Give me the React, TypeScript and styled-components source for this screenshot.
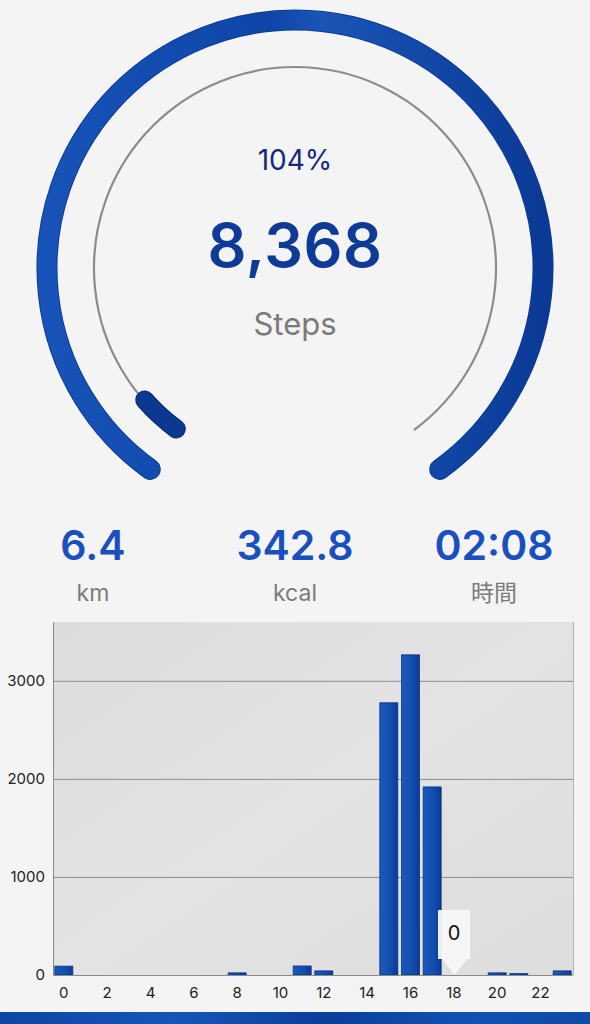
import React from "react";
import styled, { createGlobalStyle } from "styled-components";

const Global = createGlobalStyle`
  html, body { margin: 0; padding: 0; background: #f4f4f4; }
  body { font-family: "Inter", "Noto Sans CJK JP", sans-serif; overflow: hidden; }
`;

const Page = styled.div`
  width: 590px;
  height: 1024px;
  display: flex;
  flex-direction: column;
  background: #f4f4f4;
  overflow: hidden;
  & > * { flex-shrink: 0; }
`;

const GaugeSection = styled.section`
  display: grid;
  height: 520px;
  & > * { grid-area: 1 / 1; }
`;

const GaugeSvg = styled.svg`
  display: block;
  width: 590px;
  height: 505px;
`;

const GaugeText = styled.div`
  display: flex;
  flex-direction: column;
  align-items: center;
  padding-top: 143px;
`;

const Percent = styled.div`
  font-size: 28px;
  line-height: 34px;
  color: #14297a;
  font-weight: 400;
`;

const StepCount = styled.div`
  margin-top: 32px;
  font-size: 61px;
  line-height: 72px;
  font-weight: 600;
  color: #0e3b98;
  letter-spacing: 0.5px;
`;

const StepLabel = styled.div`
  margin-top: 23px;
  font-size: 31px;
  line-height: 40px;
  color: #7a7a7a;
`;

const StatsRow = styled.div`
  display: grid;
  grid-template-columns: 186px 218px 180px;
  height: 88px;
`;

const Stat = styled.div`
  display: flex;
  flex-direction: column;
  align-items: center;
  gap: 8px;
`;

const StatValue = styled.div`
  font-size: 41px;
  line-height: 50px;
  font-weight: 600;
  color: #1a4fc0;
`;

const StatLabel = styled.div`
  font-size: 23px;
  line-height: 30px;
  color: #7b7b7b;
`;

const ChartSection = styled.section`
  height: 404px;
`;

const ChartSvg = styled.svg`
  display: block;
  width: 590px;
  height: 404px;
`;

const BottomBar = styled.div`
  height: 16px;
  background: linear-gradient(90deg, #0d46a6 0%, #1656b8 30%, #0a3f9c 55%, #1252b4 80%, #0e4aa8 100%);
`;

const cx = 295;
const cy = 268;

function pt(r: number, deg: number) {
  const a = (deg * Math.PI) / 180;
  return [cx + r * Math.cos(a), cy + r * Math.sin(a)];
}

function arc(r: number, a0: number, a1: number) {
  const [x0, y0] = pt(r, a0);
  const [x1, y1] = pt(r, a1);
  const large = a1 - a0 > 180 ? 1 : 0;
  return `M ${x0.toFixed(2)} ${y0.toFixed(2)} A ${r} ${r} 0 ${large} 1 ${x1.toFixed(2)} ${y1.toFixed(2)}`;
}

const Gauge = () => (
  <GaugeSvg viewBox="0 0 590 505">
    <defs>
      <linearGradient id="outerG" x1="0" y1="0" x2="1" y2="0">
        <stop offset="0" stopColor="#1753b8" />
        <stop offset="0.45" stopColor="#0f45a8" />
        <stop offset="0.55" stopColor="#1a55b6" />
        <stop offset="1" stopColor="#0b3a96" />
      </linearGradient>
    </defs>
    <path d={arc(248, 125.7, 414.3)} fill="none" stroke="#0a3a95" strokeWidth={21} strokeLinecap="round" />
    <path d={arc(248, 125.7, 414.3)} fill="none" stroke="url(#outerG)" strokeWidth={19} strokeLinecap="round" />
    <path d={arc(201, 126.3, 413.7)} fill="none" stroke="#8c8c8c" strokeWidth={2.2} />
    <path d={arc(200, 126.4, 138.7)} fill="none" stroke="#06296f" strokeWidth={19} strokeLinecap="round" />
    <path d={arc(200, 126.4, 138.7)} fill="none" stroke="#0b3890" strokeWidth={17} strokeLinecap="round" />
  </GaugeSvg>
);

const values: Record<number, number> = {
  0: 90, 8: 22, 11: 92, 12: 42, 15: 2776, 16: 3265, 17: 1918, 20: 22, 21: 14, 23: 42,
};

const PX0 = 53;
const PX1 = 573;
const PT = 14;
const PB = 367;
const step = (PX1 - PX0) / 24;
const yFor = (v: number) => PB - (v / 3600) * (PB - PT);

const Chart = () => (
  <ChartSvg viewBox="0 0 590 404">
    <defs>
      <linearGradient id="plotBg" x1="0" y1="0" x2="1" y2="1">
        <stop offset="0" stopColor="#dcdcdc" />
        <stop offset="0.5" stopColor="#e3e3e3" />
        <stop offset="1" stopColor="#dddddd" />
      </linearGradient>
      <linearGradient id="barG" x1="0" y1="0" x2="1" y2="0">
        <stop offset="0" stopColor="#1a58bb" />
        <stop offset="0.5" stopColor="#1450b2" />
        <stop offset="1" stopColor="#0b3b96" />
      </linearGradient>
    </defs>
    <rect x={PX0} y={PT} width={PX1 - PX0} height={PB - PT} fill="url(#plotBg)" />
    {[1000, 2000, 3000].map((v) => (
      <line key={v} x1={PX0} x2={PX1} y1={yFor(v) + 0.5} y2={yFor(v) + 0.5} stroke="#8e8e8e" strokeWidth={1} />
    ))}
    <line x1={PX0 + 0.5} x2={PX0 + 0.5} y1={PT} y2={PB} stroke="#8a8a8a" strokeWidth={1} />
    <line x1={PX1 + 0.5} x2={PX1 + 0.5} y1={PT} y2={PB} stroke="#b4b4b4" strokeWidth={1} />
    {Object.entries(values).map(([h, v]) => {
      const x = PX0 + Number(h) * step + (step - 18) / 2;
      const y = yFor(v);
      return (
        <rect key={h} x={x} y={y} width={18} height={PB - y} fill="url(#barG)" stroke="#0a3284" strokeWidth={0.8} />
      );
    })}
    <line x1={PX0} x2={PX1} y1={PB + 0.5} y2={PB + 0.5} stroke="#8a8a8a" strokeWidth={1} />
    {[0, 1000, 2000, 3000].map((v) => (
      <text key={v} x={45} y={yFor(v) + 5} textAnchor="end" fontFamily="Inter, sans-serif" fontSize={15} fill="#222">
        {v}
      </text>
    ))}
    {[0, 2, 4, 6, 8, 10, 12, 14, 16, 18, 20, 22].map((h) => (
      <text key={h} x={PX0 + (h + 0.5) * step} y={390} textAnchor="middle" fontFamily="Inter, sans-serif" fontSize={15} fill="#222">
        {h}
      </text>
    ))}
    <g>
      <rect x={438} y={302} width={32} height={49} fill="#f7f7f7" fillOpacity={0.95} />
      <polygon points="442,351 467,351 454.5,367" fill="#f7f7f7" fillOpacity={0.95} />
      <text x={454} y={332} textAnchor="middle" fontFamily="Inter, sans-serif" fontSize={20} fill="#111">0</text>
    </g>
  </ChartSvg>
);

export default function App() {
  return (
    <Page>
      <Global />
      <GaugeSection>
        <Gauge />
        <GaugeText>
          <Percent>104%</Percent>
          <StepCount>8,368</StepCount>
          <StepLabel>Steps</StepLabel>
        </GaugeText>
      </GaugeSection>
      <StatsRow>
        <Stat>
          <StatValue>6.4</StatValue>
          <StatLabel>km</StatLabel>
        </Stat>
        <Stat>
          <StatValue>342.8</StatValue>
          <StatLabel>kcal</StatLabel>
        </Stat>
        <Stat>
          <StatValue>02:08</StatValue>
          <StatLabel>時間</StatLabel>
        </Stat>
      </StatsRow>
      <ChartSection>
        <Chart />
      </ChartSection>
      <BottomBar />
    </Page>
  );
}
